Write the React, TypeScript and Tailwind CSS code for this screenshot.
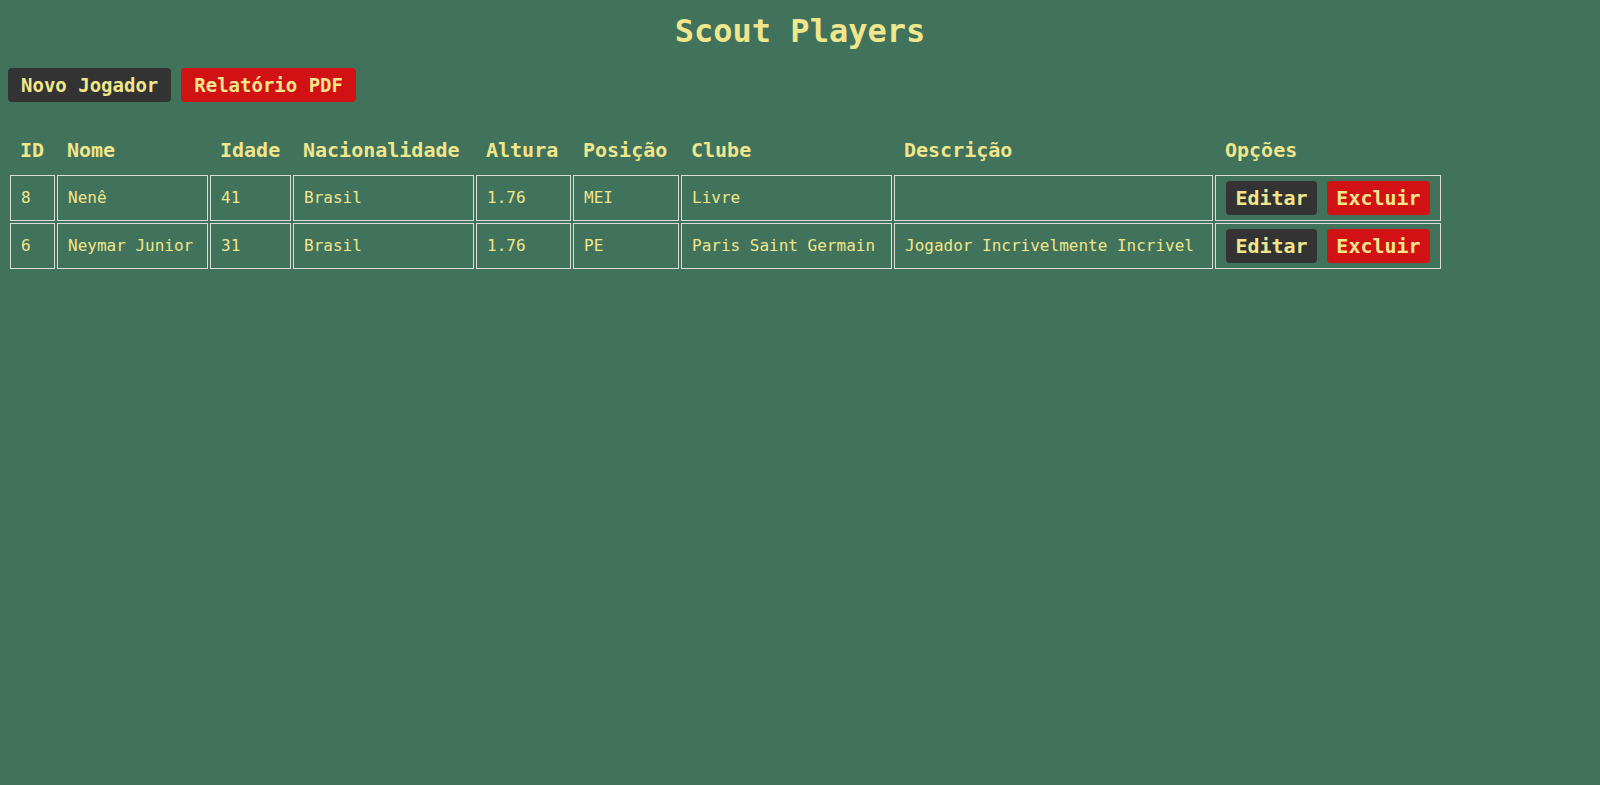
import React from 'react';

interface Player {
  id: number;
  nome: string;
  idade: number;
  nacionalidade: string;
  altura: string;
  posicao: string;
  clube: string;
  descricao: string;
}

const players: Player[] = [
  { id: 8, nome: 'Nenê', idade: 41, nacionalidade: 'Brasil', altura: '1.76', posicao: 'MEI', clube: 'Livre', descricao: '' },
  { id: 6, nome: 'Neymar Junior', idade: 31, nacionalidade: 'Brasil', altura: '1.76', posicao: 'PE', clube: 'Paris Saint Germain', descricao: 'Jogador Incrivelmente Incrivel' },
];

const font = { fontFamily: '"DejaVu Sans Mono", "Liberation Mono", monospace' };

const td = 'h-[46px] border border-[#dcdcdc] px-[10px] align-middle text-[16px] font-normal whitespace-nowrap';

export default function App() {
  return (
    <div className="min-h-screen w-full bg-[#41725b] text-[#f0e68c]" style={font}>
      <h1 className="pt-[11px] text-center text-[32px] font-bold leading-[40px]">Scout Players</h1>

      {/* top actions */}
      <div className="ml-[8px] mt-[17px] flex gap-[10px]">
        <button className="h-[34px] rounded-[4px] bg-[#333333] px-[13px] text-[19px] font-bold">Novo Jogador</button>
        <button className="h-[34px] rounded-[4px] bg-[#d21114] px-[13px] text-[19px] font-bold">Relatório PDF</button>
      </div>

      <table className="ml-[8px] mt-[23px] w-[1435px] table-fixed border-separate border-spacing-[2px] text-left">
        <thead>
          <tr className="text-[20px] font-bold">
            <th className="h-[46px] w-[45px] px-[10px]">ID</th>
            <th className="w-[151px] px-[10px]">Nome</th>
            <th className="w-[81px] px-[10px]">Idade</th>
            <th className="w-[181px] px-[10px]">Nacionalidade</th>
            <th className="w-[95px] px-[10px]">Altura</th>
            <th className="w-[106px] px-[10px]">Posição</th>
            <th className="w-[211px] px-[10px]">Clube</th>
            <th className="w-[319px] px-[10px]">Descrição</th>
            <th className="w-[226px] px-[10px]">Opções</th>
          </tr>
        </thead>
        <tbody>
          {players.map((p) => (
            <tr key={p.id}>
              <td className={td}>{p.id}</td>
              <td className={td}>{p.nome}</td>
              <td className={td}>{p.idade}</td>
              <td className={td}>{p.nacionalidade}</td>
              <td className={td}>{p.altura}</td>
              <td className={td}>{p.posicao}</td>
              <td className={td}>{p.clube}</td>
              <td className={td}>{p.descricao}</td>
              <td className="h-[46px] border border-[#dcdcdc] px-[10px] align-middle">
                <div className="flex gap-[10px]">
                  <button className="h-[34px] w-[91px] rounded-[4px] bg-[#333333] text-[20px] font-bold">Editar</button>
                  <button className="h-[34px] w-[103px] rounded-[4px] bg-[#d21114] text-[20px] font-bold">Excluir</button>
                </div>
              </td>
            </tr>
          ))}
        </tbody>
      </table>
    </div>
  );
}
